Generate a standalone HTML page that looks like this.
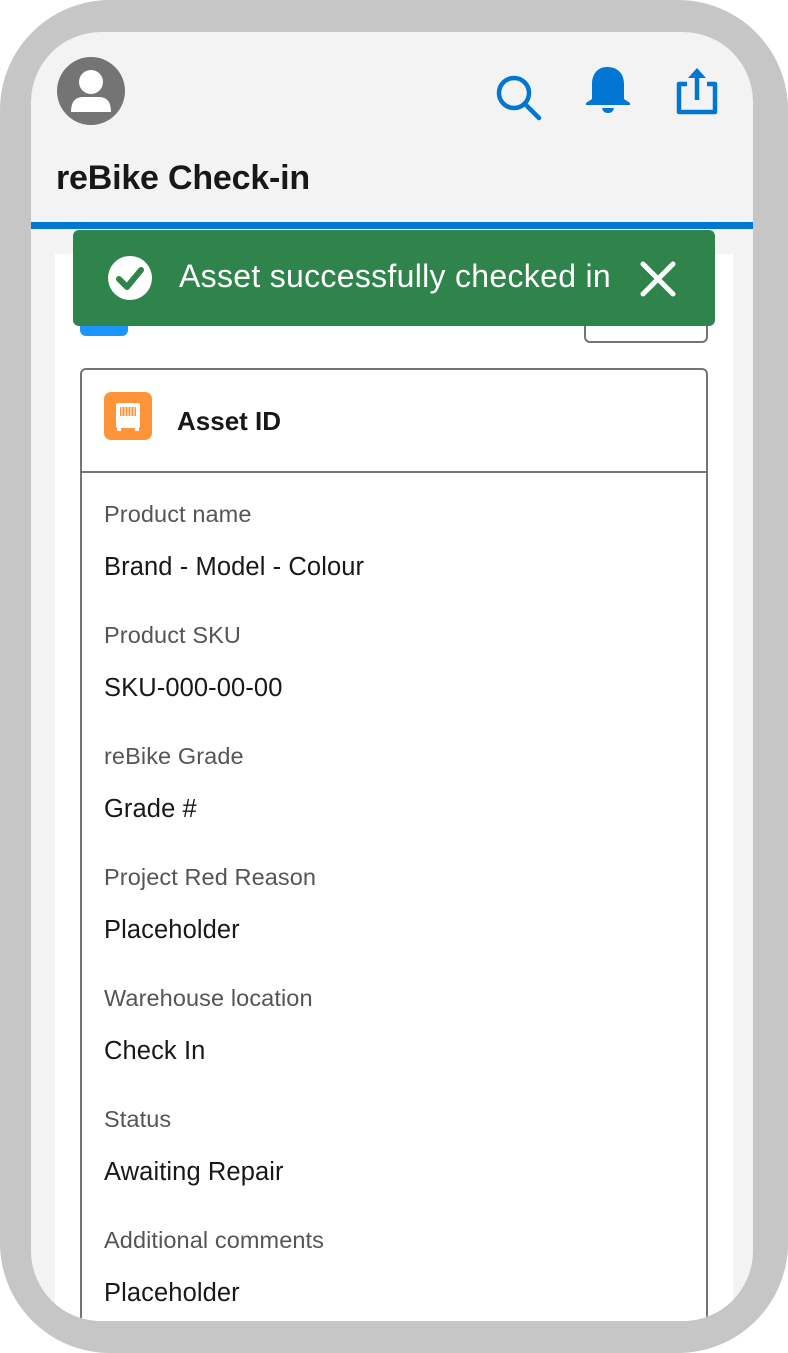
<!DOCTYPE html>
<html><head><meta charset="utf-8"><style>
*{margin:0;padding:0;box-sizing:border-box}
body{width:788px;height:1353px;background:#fff;position:relative;overflow:hidden;font-family:"Liberation Sans",Roboto,sans-serif}
.frame{position:absolute;left:0;top:0;width:788px;height:1353px;background:#c6c6c6;border-radius:110px}
.screen{position:absolute;left:31px;top:32px;width:722px;height:1289px;background:#f3f3f3;border-radius:70px;overflow:hidden}
.bar{position:absolute;left:0;top:190px;width:722px;height:7px;background:#0176d3}
.title{position:absolute;left:25px;top:127px;font-size:34px;font-weight:bold;color:#181818;letter-spacing:-0.2px}
.panel{position:absolute;left:24px;top:222px;width:678px;height:1100px;background:#fff}
.card{position:absolute;left:49px;top:336px;width:628px;height:1000px;border:2px solid #747474;border-radius:6px;background:#fff}
.cardhead{height:103px;border-bottom:2px solid #747474;position:relative}
.lbl{position:absolute;left:22px;font-size:23.5px;color:#555;letter-spacing:0.1px}
.val{position:absolute;left:22px;font-size:25.5px;color:#181818;letter-spacing:0.1px}
.toast{position:absolute;left:73px;top:230px;width:642px;height:96px;background:#2e844a;border-radius:6px}
</style></head><body>
<div class="frame"></div>
<div class="screen">
  <svg style="position:absolute;left:26px;top:25px" width="68" height="68" viewBox="0 0 68 68">
    <circle cx="34" cy="34" r="34" fill="#747474"/>
    <circle cx="34" cy="25" r="12" fill="#fff"/>
    <path d="M14 55 Q14 40 26 40 L42 40 Q54 40 54 55 Z" fill="#fff"/>
  </svg>
  <svg style="position:absolute;left:0;top:0" width="722" height="120" viewBox="0 0 722 120">
    <circle cx="483" cy="61" r="15" fill="none" stroke="#0176d3" stroke-width="4.5"/>
    <line x1="494" y1="72" x2="508" y2="86" stroke="#0176d3" stroke-width="4.5" stroke-linecap="round"/>
    <path d="M576 35 C566 35 561 43 561 52 L561 67 L555 71 L555 73 L599 73 L599 71 L593 67 L593 52 C593 43 588 35 576 35Z" fill="#0176d3"/>
    <path d="M571 76 L583 76 Q582 81 577 81 Q572 81 571 76Z" fill="#0176d3"/>
    <path d="M656 52 L648 52 L648 80 L684 80 L684 52 L676 52" fill="none" stroke="#0176d3" stroke-width="4.5" stroke-linejoin="round"/>
    <line x1="666" y1="45" x2="666" y2="68" stroke="#0176d3" stroke-width="4.5"/>
    <path d="M657 46 L666 36 L675 46 Z" fill="#0176d3"/>
  </svg>
  <div class="title">reBike Check-in</div>
  <div class="bar"></div>
  <div class="panel"></div>
  <div style="position:absolute;left:49px;top:290px;width:48px;height:14px;background:#1b96ff;border-radius:0 0 6px 6px"></div>
  <div style="position:absolute;left:553px;top:280px;width:124px;height:31px;border:2px solid #747474;border-top:none;border-radius:0 0 6px 6px;background:#fff"></div>
  <div class="card">
    <div class="cardhead">
      <svg style="position:absolute;left:22px;top:22px" width="48" height="48" viewBox="0 0 48 48">
        <rect width="48" height="48" rx="7" fill="#fe9339"/>
        <rect x="12" y="11" width="24" height="25" rx="2" fill="#fff"/>
        <rect x="13" y="35" width="4" height="4" fill="#fff"/><rect x="31" y="35" width="4" height="4" fill="#fff"/>
        <rect x="16" y="15" width="16" height="9" fill="#fe9339"/>
        <path d="M18 15v9M21 15v9M24 15v9M27 15v9M30 15v9" stroke="#fff" stroke-width="1"/>
      </svg>
      <div style="position:absolute;left:95px;top:36px;font-size:26px;font-weight:bold;color:#181818">Asset ID</div>
    </div>
    <div class="lbl" style="top:131px">Product name</div>
    <div class="val" style="top:183px">Brand - Model - Colour</div>
    <div class="lbl" style="top:252px">Product SKU</div>
    <div class="val" style="top:304px">SKU-000-00-00</div>
    <div class="lbl" style="top:373px">reBike Grade</div>
    <div class="val" style="top:425px">Grade #</div>
    <div class="lbl" style="top:494px">Project Red Reason</div>
    <div class="val" style="top:546px">Placeholder</div>
    <div class="lbl" style="top:615px">Warehouse location</div>
    <div class="val" style="top:667px">Check In</div>
    <div class="lbl" style="top:736px">Status</div>
    <div class="val" style="top:788px">Awaiting Repair</div>
    <div class="lbl" style="top:857px">Additional comments</div>
    <div class="val" style="top:909px">Placeholder</div>
  </div>
</div>
<div class="toast">
  <svg style="position:absolute;left:34px;top:25px" width="46" height="46" viewBox="0 0 46 46">
    <circle cx="23" cy="23" r="22" fill="#fff"/>
    <path d="M12 24 L20 32 L34 15" fill="none" stroke="#2e844a" stroke-width="6" stroke-linecap="round" stroke-linejoin="round"/>
  </svg>
  <div style="position:absolute;left:106px;top:28px;font-size:32px;color:#fff;letter-spacing:0.3px">Asset successfully checked in</div>
  <svg style="position:absolute;left:566px;top:30px" width="38" height="38" viewBox="0 0 38 38">
    <path d="M4 4 L34 34 M34 4 L4 34" stroke="#fff" stroke-width="5" stroke-linecap="round"/>
  </svg>
</div>
</body></html>
